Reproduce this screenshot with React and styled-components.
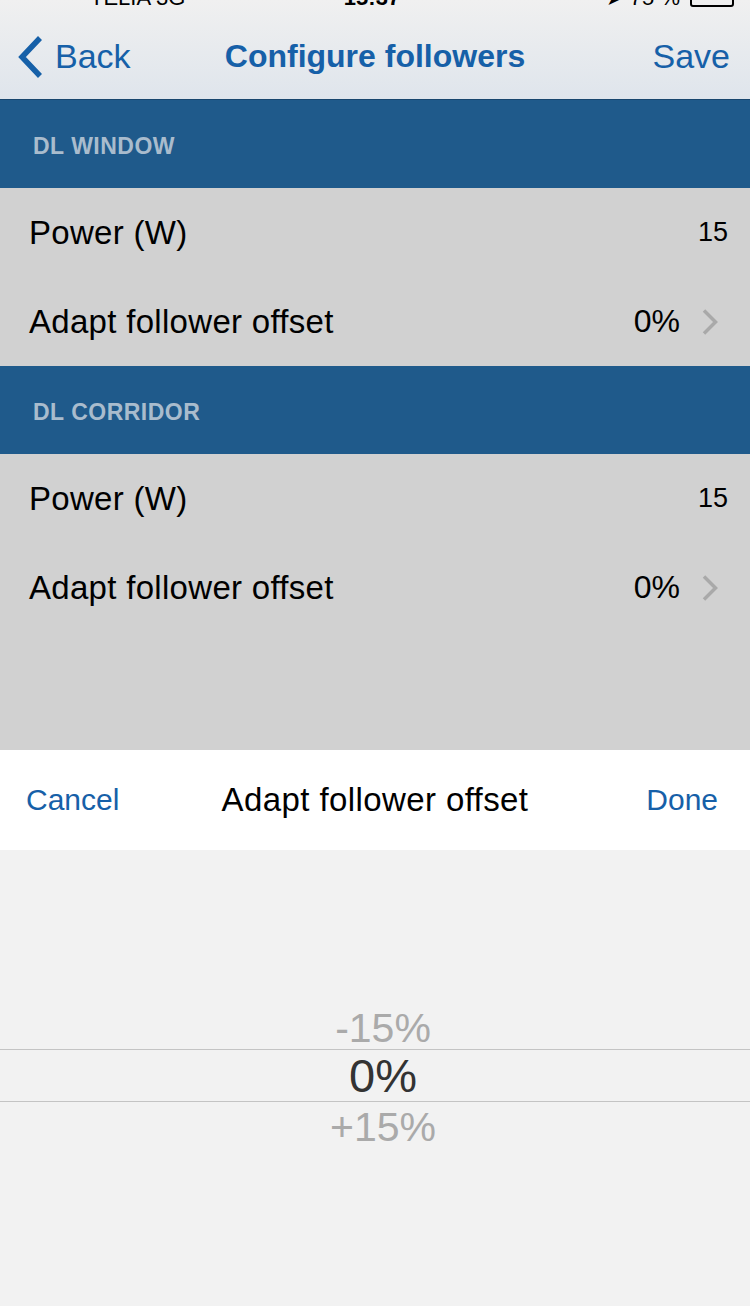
import styled, { createGlobalStyle } from "styled-components";

const GlobalStyle = createGlobalStyle`
  html, body {
    margin: 0;
    padding: 0;
    background: #f2f2f2;
  }
  body {
    font-family: "Liberation Sans", Arial, sans-serif;
    -webkit-font-smoothing: antialiased;
  }
`;

const BLUE = "#1660a8";

const Screen = styled.div`
  width: 750px;
  height: 1306px;
  display: flex;
  flex-direction: column;
  overflow: hidden;
  background: #f2f2f2;
`;

const Header = styled.div`
  height: 100px;
  flex-shrink: 0;
  background: linear-gradient(#f0f0f0, #dfe5ec);
  border-bottom: 1px solid #18466e;
  box-sizing: border-box;
  display: flex;
  flex-direction: column;
  overflow: hidden;
`;

const StatusBar = styled.div`
  height: 20px;
  margin-top: -15px;
  display: grid;
  grid-template-columns: 1fr auto 1fr;
  align-items: center;
  padding: 0 16px 0 90px;
  font-size: 22px;
  color: #000;
  flex-shrink: 0;
`;

const StatusTime = styled.span`
  font-weight: bold;
  padding-right: 80px;
`;

const StatusRight = styled.div`
  justify-self: end;
  display: flex;
  align-items: center;
  gap: 10px;
`;

const Battery = styled.span`
  width: 44px;
  height: 18px;
  border: 2px solid #000;
  border-radius: 3px;
  box-sizing: border-box;
`;

const NavBar = styled.div`
  flex: 1;
  display: flex;
  align-items: center;
  padding: 9px 20px 0 17px;
  position: relative;
`;

const NavButton = styled.button`
  border: 0;
  background: none;
  padding: 0;
  display: flex;
  align-items: center;
  gap: 12px;
  font-family: inherit;
  font-size: 34px;
  color: ${BLUE};
  margin-left: ${(p) => (p.$right ? "auto" : "0")};
`;

const NavTitle = styled.div`
  position: absolute;
  inset: 9px 0 0 0;
  display: flex;
  align-items: center;
  justify-content: center;
  font-size: 32px;
  font-weight: bold;
  color: ${BLUE};
  pointer-events: none;
`;

const SectionHeader = styled.div`
  height: 88px;
  background: #1f5a8b;
  display: flex;
  align-items: center;
  padding: 4px 33px 0;
  font-size: 23px;
  font-weight: bold;
  letter-spacing: 0.5px;
  color: #a9bccd;
  box-sizing: border-box;
  flex-shrink: 0;
`;

const Rows = styled.div`
  background: #d1d1d1;
  display: flex;
  flex-direction: column;
  flex-shrink: 0;
`;

const Row = styled.div`
  height: 89px;
  display: flex;
  align-items: center;
  padding: 0 ${(p) => (p.$link ? "32px" : "22px")} 0 29px;
  font-size: 33px;
  letter-spacing: 0.3px;
  color: #000;
`;

const RowValue = styled.span`
  margin-left: auto;
  font-size: ${(p) => (p.$small ? "27px" : "32px")};
  letter-spacing: 0;
  display: flex;
  align-items: center;
  gap: 22px;
`;

const Filler = styled.div`
  flex: 1;
  background: #d1d1d1;
`;

const PickerBar = styled.div`
  height: 100px;
  background: #fff;
  display: flex;
  align-items: center;
  padding: 0 32px 0 26px;
  flex-shrink: 0;
  position: relative;
`;

const PickerAction = styled.button`
  border: 0;
  background: none;
  padding: 0;
  font-family: inherit;
  font-size: 30px;
  color: ${BLUE};
  margin-left: ${(p) => (p.$right ? "auto" : "0")};
`;

const PickerTitle = styled.div`
  position: absolute;
  inset: 0;
  display: flex;
  align-items: center;
  justify-content: center;
  font-size: 33px;
  letter-spacing: 0.4px;
  color: #000;
  pointer-events: none;
`;

const Wheel = styled.div`
  height: 456px;
  flex-shrink: 0;
  background: #f2f2f2;
  display: flex;
  flex-direction: column;
  padding-top: 154px;
  box-sizing: border-box;
`;

const WheelItem = styled.div`
  height: ${(p) => (p.$selected ? "53px" : "45px")};
  display: flex;
  align-items: center;
  justify-content: center;
  padding: ${(p) => (p.$below ? "6px" : p.$selected ? "0" : "4px")} 0 0 16px;
  font-size: ${(p) => (p.$selected ? "47px" : "41px")};
  color: ${(p) => (p.$selected ? "#333" : "#aaa")};
  border-top: ${(p) => (p.$selected ? "1px solid #c4c4c4" : "0")};
  border-bottom: ${(p) => (p.$selected ? "1px solid #c4c4c4" : "0")};
  box-sizing: border-box;
`;

const Chevron = () => (
  <svg width="16" height="26" viewBox="0 0 16 26" fill="none">
    <path d="M2 1.5 L13.5 13 L2 24.5" stroke="#a9a9a9" strokeWidth="3.5" />
  </svg>
);

const BackChevron = () => (
  <svg width="26" height="42" viewBox="0 0 26 42" fill="none">
    <path d="M23 2 L5 21 L23 40" stroke={BLUE} strokeWidth="5.5" />
  </svg>
);

const sections = [
  { title: "DL WINDOW", power: "15", offset: "0%" },
  { title: "DL CORRIDOR", power: "15", offset: "0%" },
];

export default function App() {
  return (
    <Screen>
      <GlobalStyle />
      <Header>
        <StatusBar>
          <span>TELIA 3G</span>
          <StatusTime>15:37</StatusTime>
          <StatusRight>
            <span>➤ 75 %</span>
            <Battery />
          </StatusRight>
        </StatusBar>
        <NavBar>
          <NavButton>
            <BackChevron />
            Back
          </NavButton>
          <NavTitle>Configure followers</NavTitle>
          <NavButton $right>Save</NavButton>
        </NavBar>
      </Header>

      {sections.map((s) => (
        <div key={s.title}>
          <SectionHeader>{s.title}</SectionHeader>
          <Rows>
            <Row>
              Power (W)
              <RowValue $small>{s.power}</RowValue>
            </Row>
            <Row $link>
              Adapt follower offset
              <RowValue>
                {s.offset}
                <Chevron />
              </RowValue>
            </Row>
          </Rows>
        </div>
      ))}
      <Filler />

      <PickerBar>
        <PickerAction>Cancel</PickerAction>
        <PickerTitle>Adapt follower offset</PickerTitle>
        <PickerAction $right>Done</PickerAction>
      </PickerBar>
      <Wheel>
        <WheelItem>-15%</WheelItem>
        <WheelItem $selected>0%</WheelItem>
        <WheelItem $below>+15%</WheelItem>
      </Wheel>
    </Screen>
  );
}
